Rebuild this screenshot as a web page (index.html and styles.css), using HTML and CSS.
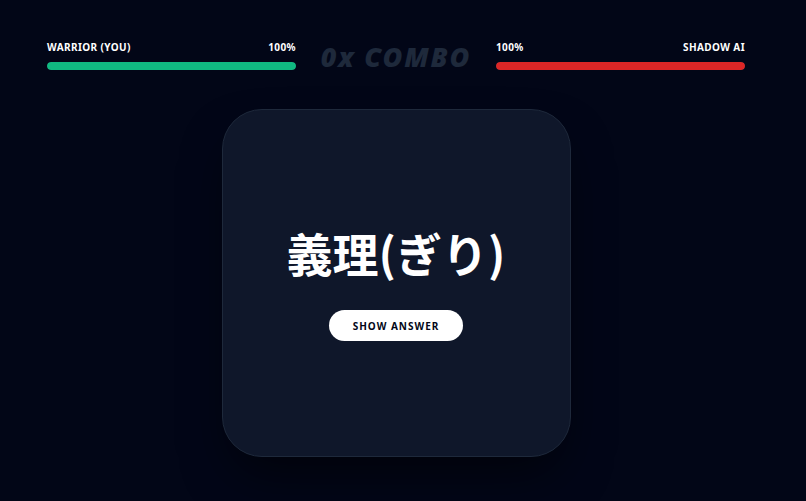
FILE: index.html
```html
<!DOCTYPE html>
<html lang="ja">
<head>
<meta charset="utf-8">
<title>Flashcard Battle</title>
<link rel="stylesheet" href="styles.css">
</head>
<body>
<div class="page">
  <header class="hud">
    <div class="fighter">
      <div class="fighter-labels">
        <span>WARRIOR (YOU)</span>
        <span>100%</span>
      </div>
      <div class="track"><div class="fill fill-player" style="width:100%"></div></div>
    </div>
    <div class="combo">0x COMBO</div>
    <div class="fighter">
      <div class="fighter-labels">
        <span>100%</span>
        <span>SHADOW AI</span>
      </div>
      <div class="track"><div class="fill fill-enemy" style="width:100%"></div></div>
    </div>
  </header>
  <main class="arena">
    <section class="card">
      <h1 class="term">義理(ぎり)</h1>
      <button class="reveal" type="button">SHOW ANSWER</button>
    </section>
  </main>
</div>
</body>
</html>
```

FILE: styles.css
```css
* { box-sizing: border-box; }
html, body {
  margin: 0;
  padding: 0;
  background: #020617;
  height: 100%;
}
body {
  font-family: "Noto Sans", "Open Sans", "Noto Sans CJK JP", sans-serif;
  color: #ffffff;
  overflow: hidden;
}
.page {
  width: 792px;
  padding: 38px 47px 0;
}
.hud {
  display: flex;
  align-items: center;
  justify-content: space-between;
  height: 34px;
}
.fighter {
  width: 249px;
  display: flex;
  flex-direction: column;
}
.fighter-labels {
  display: flex;
  justify-content: space-between;
  font-size: 10px;
  font-weight: 700;
  letter-spacing: 0.04em;
  line-height: 14px;
  margin-bottom: 8px;
}
.track {
  height: 8px;
  border-radius: 4px;
  background: #1e293b;
  overflow: hidden;
}
.fill { height: 100%; border-radius: 4px; }
.fill-player { background: #10b981; }
.fill-enemy { background: #dc2626; }
.combo {
  font-size: 27px;
  font-weight: 900;
  font-style: italic;
  color: #1e293b;
  line-height: 30px;
  letter-spacing: 1.8px;
  margin-top: 3px;
}
.arena {
  display: flex;
  justify-content: center;
  margin-top: 37px;
}
.card {
  width: 349px;
  height: 348px;
  background: #0f172a;
  border: 1px solid #1e293b;
  border-radius: 40px;
  box-shadow: 0 25px 50px -12px rgba(0, 0, 0, 0.6);
  display: flex;
  flex-direction: column;
  align-items: center;
  justify-content: center;
  gap: 35px;
  padding-top: 4px;
}
.term {
  margin: 0;
  font-family: "Noto Sans CJK JP", sans-serif;
  font-size: 46px;
  font-weight: 700;
  line-height: 46px;
}
.reveal {
  border: none;
  background: #ffffff;
  color: #020617;
  font-family: "Noto Sans", "Open Sans", sans-serif;
  font-size: 10px;
  font-weight: 700;
  letter-spacing: 0.1em;
  width: 134px;
  height: 31px;
  border-radius: 16px;
  padding: 0;
}
```
